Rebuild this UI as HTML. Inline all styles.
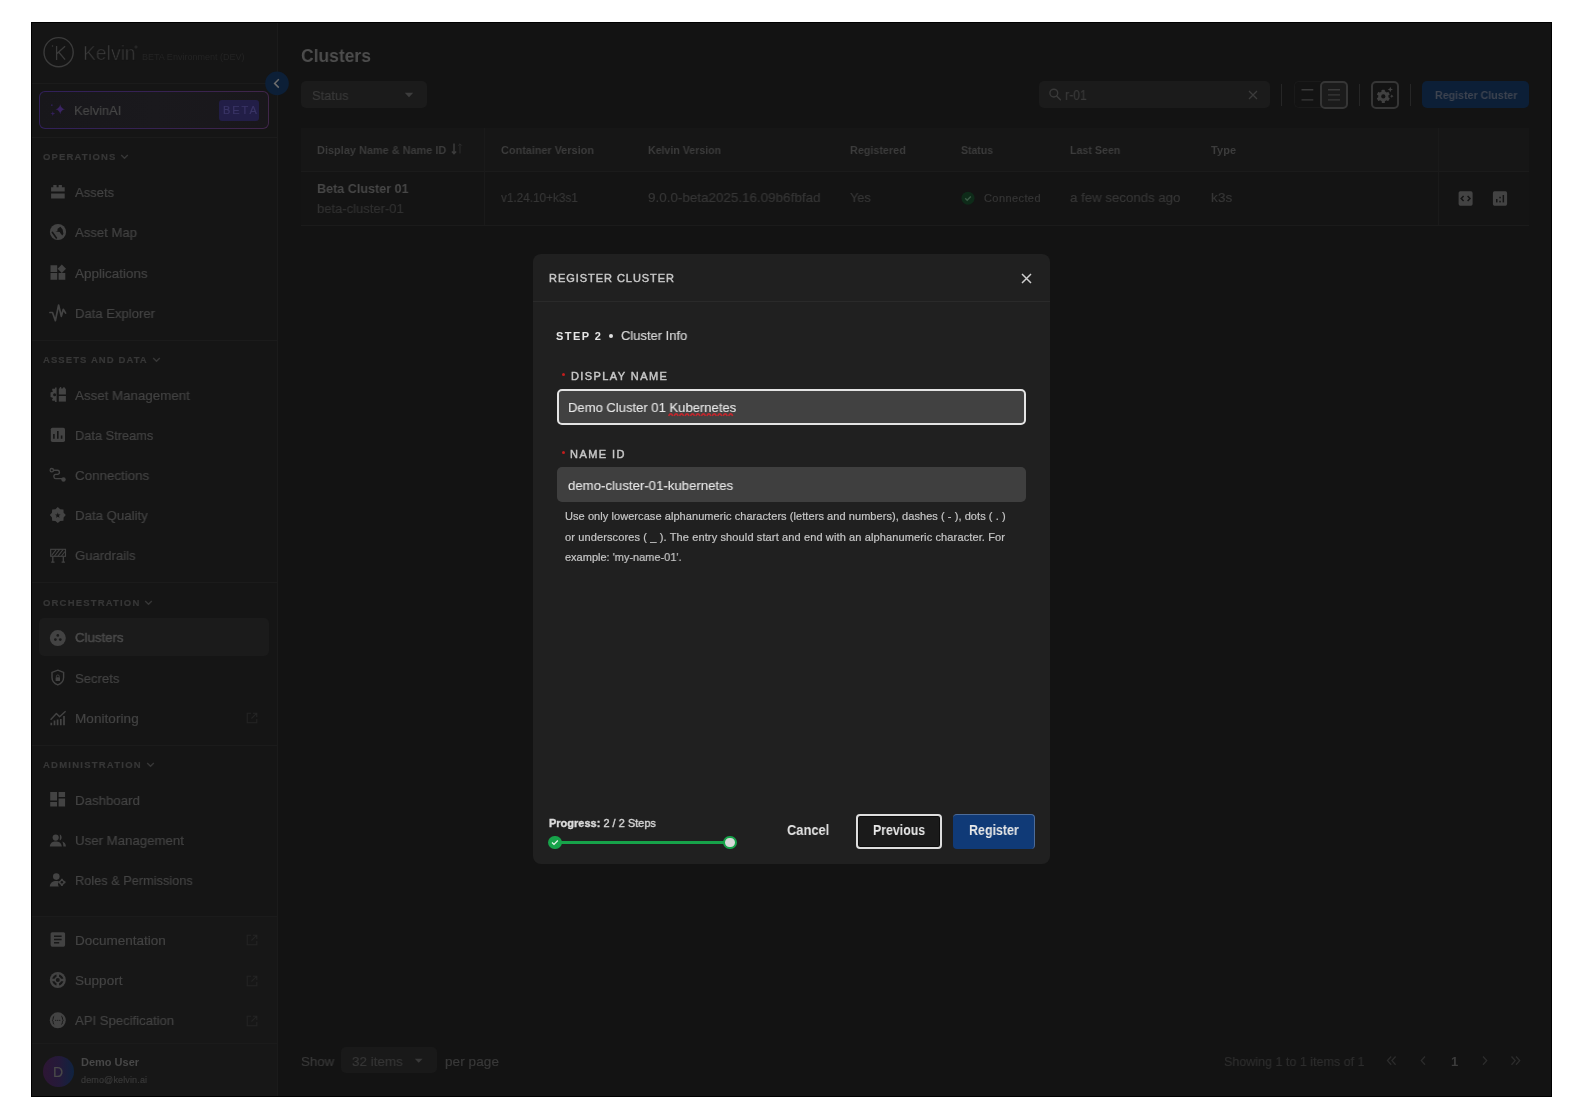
<!DOCTYPE html>
<html><head><meta charset="utf-8"><style>
html,body{margin:0;padding:0;background:#fff;width:1584px;height:1120px;overflow:hidden;}
body{position:relative;font-family:"Liberation Sans", sans-serif;}
.t{position:absolute;white-space:nowrap;line-height:20px;will-change:transform;}
.r{position:absolute;box-sizing:border-box;}
svg{position:absolute;overflow:visible;}
</style></head><body>
<div class="r" style="left:31px;top:22px;width:1521px;height:1075px;background:#000;"></div>
<div class="r" style="left:32px;top:23px;width:246px;height:1073px;background:#151515;"></div>
<div class="r" style="left:32px;top:916px;width:245px;height:180px;background:#171717;"></div>
<div class="r" style="left:277px;top:23px;width:1px;height:1073px;background:#1b1b1b;"></div>
<div class="r" style="left:278px;top:23px;width:1273px;height:1073px;background:#131313;"></div>
<div class="r" style="left:32px;top:83px;width:245px;height:1px;background:#1b1b1b;"></div>
<div class="r" style="left:32px;top:137px;width:245px;height:1px;background:#1b1b1b;"></div>
<div class="r" style="left:32px;top:340px;width:245px;height:1px;background:#1b1b1b;"></div>
<div class="r" style="left:32px;top:582px;width:245px;height:1px;background:#1b1b1b;"></div>
<div class="r" style="left:32px;top:745px;width:245px;height:1px;background:#1b1b1b;"></div>
<div class="r" style="left:32px;top:916px;width:245px;height:1px;background:#1b1b1b;"></div>
<div class="r" style="left:32px;top:1043px;width:245px;height:1px;background:#1b1b1b;"></div>
<svg style="left:43px;top:37px" width="32" height="32" viewBox="0 0 32 32"><circle cx="15.6" cy="15.2" r="14.6" fill="none" stroke="#3b3b3b" stroke-width="1.4"/><path d="M13.6 9V22.9M22.1 9.3L14 16.5M15.6 15L22.1 22.6" fill="none" stroke="#3b3b3b" stroke-width="1.3"/><circle cx="9.5" cy="9.1" r="0.75" fill="#3b3b3b"/></svg>
<span id="t23935548" class="t" style="left:83.00px;top:42.60px;font-size:20px;font-weight:300;color:#3e3e3e;letter-spacing:0.000px;transform:scaleX(0.9648);transform-origin:0 50%;-webkit-text-stroke:0.55px #151515;">Kelvin</span>
<svg style="left:134px;top:45px" width="4" height="4"><circle cx="2" cy="2" r="1.1" fill="none" stroke="#3b3b3b" stroke-width="0.6"/></svg>
<span id="tac954c5f" class="t" style="left:142.00px;top:47.31px;font-size:9px;font-weight:400;color:#242424;letter-spacing:0.005px;">BETA Environment (DEV)</span>
<svg style="left:265px;top:71px" width="24" height="24" viewBox="0 0 24 24"><circle cx="12" cy="12.4" r="11.8" fill="#0c1f37"/><path d="M13.8 8.2L9.6 12.4L13.8 16.6" fill="none" stroke="#6d6d6d" stroke-width="1.5"/></svg>
<div class="r" style="left:39px;top:91px;width:230px;height:38px;border-radius:6px;padding:1.2px;background:linear-gradient(90deg,#31205a,#372252 55%,#40264a);"><div style="width:100%;height:100%;border-radius:5px;background:linear-gradient(90deg,#18171b,#1a191d 50%,#19171b);"></div></div>
<svg style="left:46px;top:101px" width="20" height="18" viewBox="46 101 20 18"><path d="M60.2 104.2 Q60.9 108.4 65 109.2 Q60.9 110 60.2 114.2 Q59.5 110 55.4 109.2 Q59.5 108.4 60.2 104.2Z" fill="#3a2463"/><path d="M52.8 111.2l.6 1.8 1.8.6-1.8.6-.6 1.8-.6-1.8-1.8-.6 1.8-.6z" fill="#33205a"/><circle cx="51.8" cy="105.2" r="0.9" fill="#2e1f52"/></svg>
<span id="t8eb9d1ca" class="t" style="left:74.30px;top:101.00px;font-size:13.5px;font-weight:400;color:#474747;letter-spacing:0.000px;transform:scaleX(0.9540);transform-origin:0 50%;-webkit-text-stroke:0.2px #474747;">KelvinAI</span>
<div class="r" style="left:219px;top:100px;width:40px;height:21px;background:#221e47;border-radius:3px;"></div>
<span id="t5f66c6d7" class="t" style="left:222.50px;top:100.31px;font-size:11px;font-weight:400;color:#3a3566;letter-spacing:1.933px;-webkit-text-stroke:0.2px #3a3566;">BETA</span>
<span id="t2fee27fb" class="t" style="left:42.70px;top:147.11px;font-size:9.5px;font-weight:700;color:#373737;letter-spacing:1.133px;-webkit-text-stroke:0.2px #373737;">OPERATIONS</span>
<svg style="left:119.5px;top:154.1px" width="10" height="6" viewBox="0 0 10 6"><path d="M1.2 1L4.5 4.3L7.8 1" fill="none" stroke="#373737" stroke-width="1.4"/></svg>
<span id="t992ae961" class="t" style="left:75.30px;top:183.00px;font-size:13.5px;font-weight:400;color:#434343;letter-spacing:0.000px;transform:scaleX(0.9634);transform-origin:0 50%;-webkit-text-stroke:0.2px #434343;">Assets</span>
<span id="t16f8bc88" class="t" style="left:75.30px;top:223.31px;font-size:13.5px;font-weight:400;color:#434343;letter-spacing:0.000px;transform:scaleX(0.9719);transform-origin:0 50%;-webkit-text-stroke:0.2px #434343;">Asset Map</span>
<span id="tbd119a5a" class="t" style="left:75.30px;top:263.50px;font-size:13.5px;font-weight:400;color:#434343;letter-spacing:0.000px;transform:scaleX(0.9973);transform-origin:0 50%;-webkit-text-stroke:0.2px #434343;">Applications</span>
<span id="tb3951d84" class="t" style="left:75.30px;top:303.50px;font-size:13.5px;font-weight:400;color:#434343;letter-spacing:0.000px;transform:scaleX(0.9687);transform-origin:0 50%;-webkit-text-stroke:0.2px #434343;">Data Explorer</span>
<span id="t3114021c" class="t" style="left:42.70px;top:349.80px;font-size:9.5px;font-weight:700;color:#373737;letter-spacing:1.086px;-webkit-text-stroke:0.2px #373737;">ASSETS AND DATA</span>
<svg style="left:151.5px;top:356.8px" width="10" height="6" viewBox="0 0 10 6"><path d="M1.2 1L4.5 4.3L7.8 1" fill="none" stroke="#373737" stroke-width="1.4"/></svg>
<span id="t4a658050" class="t" style="left:75.30px;top:385.50px;font-size:13.5px;font-weight:400;color:#434343;letter-spacing:0.000px;transform:scaleX(0.9871);transform-origin:0 50%;-webkit-text-stroke:0.2px #434343;">Asset Management</span>
<span id="t563b46b2" class="t" style="left:75.30px;top:425.81px;font-size:13.5px;font-weight:400;color:#434343;letter-spacing:0.000px;transform:scaleX(0.9482);transform-origin:0 50%;-webkit-text-stroke:0.2px #434343;">Data Streams</span>
<span id="t97691725" class="t" style="left:75.30px;top:466.20px;font-size:13.5px;font-weight:400;color:#434343;letter-spacing:0.000px;transform:scaleX(0.9893);transform-origin:0 50%;-webkit-text-stroke:0.2px #434343;">Connections</span>
<span id="t1be241d7" class="t" style="left:75.30px;top:506.00px;font-size:13.5px;font-weight:400;color:#434343;letter-spacing:0.000px;transform:scaleX(0.9797);transform-origin:0 50%;-webkit-text-stroke:0.2px #434343;">Data Quality</span>
<span id="t49b28394" class="t" style="left:75.30px;top:546.20px;font-size:13.5px;font-weight:400;color:#434343;letter-spacing:0.000px;transform:scaleX(0.9726);transform-origin:0 50%;-webkit-text-stroke:0.2px #434343;">Guardrails</span>
<span id="t620712aa" class="t" style="left:42.70px;top:592.80px;font-size:9.5px;font-weight:700;color:#373737;letter-spacing:1.175px;-webkit-text-stroke:0.2px #373737;">ORCHESTRATION</span>
<svg style="left:143.5px;top:599.8px" width="10" height="6" viewBox="0 0 10 6"><path d="M1.2 1L4.5 4.3L7.8 1" fill="none" stroke="#373737" stroke-width="1.4"/></svg>
<div class="r" style="left:39px;top:618px;width:230px;height:38px;background:#1b1b1b;border-radius:5px;"></div>
<span id="t260d12a1" class="t" style="left:75.30px;top:628.11px;font-size:13.5px;font-weight:400;color:#4a4a4a;letter-spacing:0.000px;transform:scaleX(0.9800);transform-origin:0 50%;-webkit-text-stroke:0.5px #4a4a4a;">Clusters</span>
<span id="t4fb7b7b8" class="t" style="left:75.30px;top:668.61px;font-size:13.5px;font-weight:400;color:#434343;letter-spacing:0.000px;transform:scaleX(0.9696);transform-origin:0 50%;-webkit-text-stroke:0.2px #434343;">Secrets</span>
<span id="td3384657" class="t" style="left:75.30px;top:708.90px;font-size:13.5px;font-weight:400;color:#434343;letter-spacing:0.067px;-webkit-text-stroke:0.2px #434343;">Monitoring</span>
<span id="taa898c11" class="t" style="left:42.70px;top:754.91px;font-size:9.5px;font-weight:700;color:#373737;letter-spacing:1.231px;-webkit-text-stroke:0.2px #373737;">ADMINISTRATION</span>
<svg style="left:145.5px;top:761.9px" width="10" height="6" viewBox="0 0 10 6"><path d="M1.2 1L4.5 4.3L7.8 1" fill="none" stroke="#373737" stroke-width="1.4"/></svg>
<span id="t4c94cc49" class="t" style="left:75.30px;top:790.61px;font-size:13.5px;font-weight:400;color:#434343;letter-spacing:0.000px;transform:scaleX(0.9833);transform-origin:0 50%;-webkit-text-stroke:0.2px #434343;">Dashboard</span>
<span id="tb8283012" class="t" style="left:75.30px;top:831.00px;font-size:13.5px;font-weight:400;color:#434343;letter-spacing:0.000px;transform:scaleX(0.9811);transform-origin:0 50%;-webkit-text-stroke:0.2px #434343;">User Management</span>
<span id="t43deff85" class="t" style="left:75.30px;top:871.00px;font-size:13.5px;font-weight:400;color:#434343;letter-spacing:0.000px;transform:scaleX(0.9456);transform-origin:0 50%;-webkit-text-stroke:0.2px #434343;">Roles & Permissions</span>
<span id="tbf958b15" class="t" style="left:75.30px;top:930.90px;font-size:13.5px;font-weight:400;color:#434343;letter-spacing:0.000px;transform:scaleX(0.9967);transform-origin:0 50%;-webkit-text-stroke:0.2px #434343;">Documentation</span>
<span id="t38ddc886" class="t" style="left:75.30px;top:971.31px;font-size:13.5px;font-weight:400;color:#434343;letter-spacing:0.033px;-webkit-text-stroke:0.2px #434343;">Support</span>
<span id="t636bf80a" class="t" style="left:75.30px;top:1011.31px;font-size:13.5px;font-weight:400;color:#434343;letter-spacing:0.000px;transform:scaleX(0.9716);transform-origin:0 50%;-webkit-text-stroke:0.2px #434343;">API Specification</span>
<svg style="left:246px;top:712px" width="12" height="12" viewBox="0 0 12 12"><path d="M5 1.2H1.2V10.8H10.8V7M7 1.2H10.8V5M10.8 1.2L5.5 6.5" fill="none" stroke="#242424" stroke-width="1.1"/></svg>
<svg style="left:246px;top:934px" width="12" height="12" viewBox="0 0 12 12"><path d="M5 1.2H1.2V10.8H10.8V7M7 1.2H10.8V5M10.8 1.2L5.5 6.5" fill="none" stroke="#242424" stroke-width="1.1"/></svg>
<svg style="left:246px;top:975px" width="12" height="12" viewBox="0 0 12 12"><path d="M5 1.2H1.2V10.8H10.8V7M7 1.2H10.8V5M10.8 1.2L5.5 6.5" fill="none" stroke="#242424" stroke-width="1.1"/></svg>
<svg style="left:246px;top:1015px" width="12" height="12" viewBox="0 0 12 12"><path d="M5 1.2H1.2V10.8H10.8V7M7 1.2H10.8V5M10.8 1.2L5.5 6.5" fill="none" stroke="#242424" stroke-width="1.1"/></svg>
<div class="r" style="left:42.5px;top:1055.5px;width:31px;height:31px;border-radius:50%;background:linear-gradient(90deg,#2d1634,#241a3a 55%,#0f2340);"></div>
<span id="t5b27cf1a" class="t" style="left:52.50px;top:1061.52px;font-size:14px;font-weight:400;color:#4a4a4a;letter-spacing:0.000px;-webkit-text-stroke:0.2px #4a4a4a;">D</span>
<span id="t9c03d053" class="t" style="left:81.30px;top:1052.31px;font-size:11px;font-weight:700;color:#474747;letter-spacing:0.000px;transform:scaleX(0.9983);transform-origin:0 50%;">Demo User</span>
<span id="ta2ef6f14" class="t" style="left:81.30px;top:1069.61px;font-size:9px;font-weight:400;color:#393939;letter-spacing:0.146px;-webkit-text-stroke:0.2px #393939;">demo@kelvin.ai</span>
<span id="t1c065526" class="t" style="left:301.40px;top:45.50px;font-size:19px;font-weight:700;color:#4d4d4d;letter-spacing:0.000px;transform:scaleX(0.9197);transform-origin:0 50%;">Clusters</span>
<div class="r" style="left:301px;top:81px;width:126px;height:27px;background:#1b1b1b;border-radius:5px;"></div>
<span id="t708f55a0" class="t" style="left:311.80px;top:85.90px;font-size:13.5px;font-weight:400;color:#393939;letter-spacing:0.000px;transform:scaleX(0.9553);transform-origin:0 50%;-webkit-text-stroke:0.2px #393939;">Status</span>
<svg style="left:404px;top:92px" width="10" height="6"><path d="M0.8 0.8H9.2L5 5.2Z" fill="#3d3d3d"/></svg>
<div class="r" style="left:1039px;top:81px;width:231px;height:27px;background:#1b1b1b;border-radius:5px;"></div>
<svg style="left:1047px;top:86px" width="16" height="16" viewBox="1047 86 16 16"><circle cx="1053.8" cy="93.1" r="3.9" fill="none" stroke="#393939" stroke-width="1.4"/><path d="M1056.6 96L1060.4 99.8" stroke="#393939" stroke-width="1.6" stroke-linecap="round"/></svg>
<span id="tf2311ad7" class="t" style="left:1065.00px;top:84.80px;font-size:14px;font-weight:400;color:#393939;letter-spacing:0.000px;transform:scaleX(0.8800);transform-origin:0 50%;-webkit-text-stroke:0.2px #393939;">r-01</span>
<svg style="left:1248px;top:90px" width="10" height="10" viewBox="0 0 10 10"><path d="M1 1L9 9M9 1L1 9" stroke="#3b3b3b" stroke-width="1.3"/></svg>
<div class="r" style="left:1281px;top:84px;width:1px;height:22px;background:#262626;"></div>
<div class="r" style="left:1359px;top:84px;width:1px;height:22px;background:#262626;"></div>
<div class="r" style="left:1410px;top:84px;width:1px;height:22px;background:#262626;"></div>
<div class="r" style="left:1294px;top:81px;width:27px;height:27px;border:1.5px solid #1a1a1a;border-right:none;border-radius:5px 0 0 5px;"></div>
<div class="r" style="left:1320px;top:81px;width:28px;height:27.5px;border:2px solid #363636;border-radius:5px;background:#1b1b1b;"></div>
<svg style="left:1301px;top:89px" width="14" height="14"><path d="M0.5 0.8H12.3M0.5 10.9H12.3" stroke="#3a3a3a" stroke-width="1.4"/></svg>
<svg style="left:1328px;top:89px" width="14" height="14"><path d="M0 0.8H12M0 5.9H12M0 10.9H12" stroke="#3a3a3a" stroke-width="1.4"/></svg>
<div class="r" style="left:1371px;top:81px;width:28px;height:27.700000000000003px;border:2px solid #363636;border-radius:5px;"></div>
<svg style="left:1374px;top:86px" width="22" height="20" viewBox="1374 86 22 20"><g fill="#414141"><circle cx="1383.3" cy="96.4" r="5.1"/><g transform="translate(1383.3 96.4)"><rect x="-1.6" y="-6.6" width="3.2" height="13.2" rx="0.4"/><rect x="-1.6" y="-6.6" width="3.2" height="13.2" rx="0.4" transform="rotate(60)"/><rect x="-1.6" y="-6.6" width="3.2" height="13.2" rx="0.4" transform="rotate(120)"/></g></g><circle cx="1383.3" cy="96.4" r="2.1" fill="#131313"/><path d="M1390.3 86.8L1391.1 88.7L1393 89.5L1391.1 90.3L1390.3 92.2L1389.5 90.3L1387.6 89.5L1389.5 88.7Z M1391.8 94.4L1392.4 95.6L1393.6 96.2L1392.4 96.8L1391.8 98L1391.2 96.8L1390 96.2L1391.2 95.6Z" fill="#414141"/></svg>
<div class="r" style="left:1422px;top:81px;width:107px;height:27px;background:#0c1f37;border-radius:5px;"></div>
<span id="tee40b4aa" class="t" style="left:1434.70px;top:85.21px;font-size:11px;font-weight:700;color:#3e4450;letter-spacing:0.000px;transform:scaleX(0.9694);transform-origin:0 50%;">Register Cluster</span>
<div class="r" style="left:301px;top:128px;width:1228px;height:43px;background:#161616;"></div>
<div class="r" style="left:301px;top:171px;width:1228px;height:54px;background:#141414;"></div>
<div class="r" style="left:301px;top:170.5px;width:1228px;height:1.0px;background:#1b1b1b;"></div>
<div class="r" style="left:301px;top:224.5px;width:1228px;height:1.0px;background:#1b1b1b;"></div>
<div class="r" style="left:484px;top:128px;width:1px;height:97px;background:#1a1a1a;"></div>
<div class="r" style="left:1437.5px;top:128px;width:1.0px;height:97px;background:#1a1a1a;"></div>
<span id="td6a3cb3b" class="t" style="left:316.50px;top:140.21px;font-size:11px;font-weight:700;color:#3c3c3c;letter-spacing:0.000px;transform:scaleX(0.9931);transform-origin:0 50%;">Display Name &amp; Name ID</span>
<svg style="left:451px;top:143px" width="12" height="12" viewBox="0 0 12 12"><path d="M3 0.5V10.5M0.9 8.4L3 10.6L5.1 8.4" fill="none" stroke="#3c3c3c" stroke-width="1.5"/><path d="M9 10.5V0.8M7.2 2.6L9 0.8L10.8 2.6" fill="none" stroke="#2d2d2d" stroke-width="1"/></svg>
<span id="t8d4c1b64" class="t" style="left:500.90px;top:139.81px;font-size:11px;font-weight:700;color:#3c3c3c;letter-spacing:0.000px;transform:scaleX(0.9862);transform-origin:0 50%;">Container Version</span>
<span id="t4822bce1" class="t" style="left:647.50px;top:139.81px;font-size:11px;font-weight:700;color:#3c3c3c;letter-spacing:0.000px;transform:scaleX(0.9645);transform-origin:0 50%;">Kelvin Version</span>
<span id="tf69fe2a7" class="t" style="left:850.10px;top:139.81px;font-size:11px;font-weight:700;color:#3c3c3c;letter-spacing:0.000px;transform:scaleX(0.9807);transform-origin:0 50%;">Registered</span>
<span id="t34ab815f" class="t" style="left:960.70px;top:139.81px;font-size:11px;font-weight:700;color:#3c3c3c;letter-spacing:0.000px;transform:scaleX(0.9529);transform-origin:0 50%;">Status</span>
<span id="t75c7f643" class="t" style="left:1070.30px;top:139.81px;font-size:11px;font-weight:700;color:#3c3c3c;letter-spacing:0.000px;transform:scaleX(0.9673);transform-origin:0 50%;">Last Seen</span>
<span id="tf9cd95cb" class="t" style="left:1211.20px;top:139.81px;font-size:11px;font-weight:700;color:#3c3c3c;letter-spacing:0.067px;">Type</span>
<span id="taf60aa4c" class="t" style="left:316.50px;top:179.00px;font-size:13.5px;font-weight:700;color:#474747;letter-spacing:0.000px;transform:scaleX(0.9316);transform-origin:0 50%;">Beta Cluster 01</span>
<span id="tb2fccb8c" class="t" style="left:316.50px;top:198.81px;font-size:13.5px;font-weight:400;color:#313131;letter-spacing:0.000px;transform:scaleX(0.9633);transform-origin:0 50%;-webkit-text-stroke:0.2px #313131;">beta-cluster-01</span>
<span id="t3e6a62fd" class="t" style="left:500.90px;top:188.20px;font-size:13.5px;font-weight:400;color:#363636;letter-spacing:0.000px;transform:scaleX(0.8705);transform-origin:0 50%;-webkit-text-stroke:0.2px #363636;">v1.24.10+k3s1</span>
<span id="t99ccfb00" class="t" style="left:647.50px;top:188.20px;font-size:13.5px;font-weight:400;color:#363636;letter-spacing:0.000px;transform:scaleX(0.9948);transform-origin:0 50%;-webkit-text-stroke:0.2px #363636;">9.0.0-beta2025.16.09b6fbfad</span>
<span id="tad3ee24d" class="t" style="left:850.10px;top:188.20px;font-size:13.5px;font-weight:400;color:#363636;letter-spacing:0.000px;transform:scaleX(0.9409);transform-origin:0 50%;-webkit-text-stroke:0.2px #363636;">Yes</span>
<svg style="left:961px;top:191px" width="14" height="14" viewBox="0 0 14 14"><circle cx="7" cy="7.2" r="6.5" fill="#0e2b19"/><path d="M4.2 7.3L6.2 9.2L9.8 5.4" fill="none" stroke="#3b5a46" stroke-width="1.4"/></svg>
<span id="t0bffc30a" class="t" style="left:984.00px;top:188.40px;font-size:11px;font-weight:400;color:#363636;letter-spacing:0.412px;-webkit-text-stroke:0.2px #363636;">Connected</span>
<span id="t7504d821" class="t" style="left:1070.30px;top:188.20px;font-size:13.5px;font-weight:400;color:#363636;letter-spacing:0.000px;transform:scaleX(0.9814);transform-origin:0 50%;-webkit-text-stroke:0.2px #363636;">a few seconds ago</span>
<span id="t6935d677" class="t" style="left:1211.00px;top:188.20px;font-size:13.5px;font-weight:400;color:#363636;letter-spacing:0.150px;-webkit-text-stroke:0.2px #363636;">k3s</span>
<svg style="left:1456px;top:189px" width="56" height="20" viewBox="1456 189 56 20"><rect x="1458.6" y="191.3" width="14" height="14.4" rx="1.6" fill="#434343"/><path d="M1463.6 196.1L1461.2 198.6L1463.6 201.1M1467.6 196.1L1470 198.6L1467.6 201.1" fill="none" stroke="#141414" stroke-width="1.5"/><rect x="1492.9" y="191.3" width="14.2" height="14.4" rx="1.6" fill="#434343"/><g fill="#141414"><rect x="1496" y="199" width="1.5" height="3.4"/><rect x="1499.3" y="196.8" width="1.5" height="1.5"/><rect x="1499.3" y="200.8" width="1.5" height="1.6"/><rect x="1502.6" y="195" width="1.5" height="7.4"/></g></svg>
<span id="t52ae882c" class="t" style="left:301.20px;top:1051.81px;font-size:13.5px;font-weight:400;color:#393939;letter-spacing:0.000px;transform:scaleX(0.9824);transform-origin:0 50%;-webkit-text-stroke:0.2px #393939;">Show</span>
<div class="r" style="left:341px;top:1047px;width:96px;height:26px;background:#191919;border-radius:5px;"></div>
<span id="t8b9e0cdb" class="t" style="left:352.10px;top:1051.81px;font-size:13.5px;font-weight:400;color:#363636;letter-spacing:0.000px;transform:scaleX(0.9941);transform-origin:0 50%;-webkit-text-stroke:0.2px #363636;">32 items</span>
<svg style="left:414px;top:1058px" width="10" height="6"><path d="M0.8 0.8H8.6L4.7 4.8Z" fill="#393939"/></svg>
<span id="t15814784" class="t" style="left:445.20px;top:1051.81px;font-size:13.5px;font-weight:400;color:#393939;letter-spacing:0.086px;-webkit-text-stroke:0.2px #393939;">per page</span>
<span id="ta0619747" class="t" style="left:1223.90px;top:1051.70px;font-size:13.5px;font-weight:400;color:#2e2e2e;letter-spacing:0.000px;transform:scaleX(0.9276);transform-origin:0 50%;-webkit-text-stroke:0.2px #2e2e2e;">Showing 1 to 1 items of 1</span>
<svg style="left:1386px;top:1054px" width="140" height="14" viewBox="0 0 140 14"><path d="M5.2 2.5L1.5 6.6L5.2 10.7M9.6 2.5L5.9 6.6L9.6 10.7" fill="none" stroke="#2c2c2c" stroke-width="1.3"/><path d="M39 2.5L35.3 6.6L39 10.7" fill="none" stroke="#2c2c2c" stroke-width="1.3"/><path d="M97 2.5L100.7 6.6L97 10.7" fill="none" stroke="#2c2c2c" stroke-width="1.3"/><path d="M125.5 2.5L129.2 6.6L125.5 10.7M130 2.5L133.7 6.6L130 10.7" fill="none" stroke="#2c2c2c" stroke-width="1.3"/></svg>
<span id="t20fd6f6d" class="t" style="left:1450.50px;top:1051.70px;font-size:13px;font-weight:700;color:#3c3c3c;letter-spacing:0.000px;">1</span>
<div class="r" style="left:533px;top:254px;width:517px;height:610px;background:#202020;border-radius:8px;"></div>
<div class="r" style="left:533px;top:301px;width:517px;height:1px;background:#2a2a2a;"></div>
<span id="t78e3d27e" class="t" style="left:548.80px;top:268.21px;font-size:11px;font-weight:400;color:#c8c8c8;letter-spacing:0.960px;-webkit-text-stroke:0.45px #c8c8c8;">REGISTER CLUSTER</span>
<svg style="left:1021px;top:272.5px" width="11" height="11" viewBox="0 0 11 11"><path d="M1 1L10 10M10 1L1 10" stroke="#cfcfcf" stroke-width="1.45"/></svg>
<span id="tf3922d97" class="t" style="left:556.10px;top:326.01px;font-size:11px;font-weight:700;color:#e6e6e6;letter-spacing:1.420px;">STEP 2</span>
<div class="r" style="left:608.6px;top:333.5px;width:4.6px;height:4.6px;border-radius:50%;background:#e0e0e0;"></div>
<span id="t41108e8b" class="t" style="left:621.00px;top:326.00px;font-size:13.5px;font-weight:400;color:#d6d6d6;letter-spacing:0.000px;transform:scaleX(0.9594);transform-origin:0 50%;-webkit-text-stroke:0.2px #d6d6d6;">Cluster Info</span>
<div class="r" style="left:561.5px;top:372.6px;width:3px;height:3px;border-radius:50%;background:#c21d1d;"></div>
<span id="t509546b9" class="t" style="left:570.50px;top:366.31px;font-size:11px;font-weight:400;color:#c8c8c8;letter-spacing:1.409px;-webkit-text-stroke:0.45px #c8c8c8;">DISPLAY NAME</span>
<div class="r" style="left:557px;top:389px;width:469px;height:35.5px;background:#414141;border:2px solid #e4e4e4;border-radius:5px;"></div>
<span id="t4d1bfd4b" class="t" style="left:567.90px;top:397.80px;font-size:13.6px;font-weight:400;color:#e6e6e6;letter-spacing:0.000px;transform:scaleX(0.9594);transform-origin:0 50%;-webkit-text-stroke:0.1px #e6e6e6;">Demo Cluster 01 Kubernetes</span>
<svg style="left:666px;top:410px" width="72" height="8" viewBox="666 410 72 8"><path d="M668.60 415.8 Q670.70 411.9 672.80 415.8" fill="none" stroke="#c0272d" stroke-width="1.6"/><path d="M674.05 415.8 Q676.15 411.9 678.25 415.8" fill="none" stroke="#c0272d" stroke-width="1.6"/><path d="M679.50 415.8 Q681.60 411.9 683.70 415.8" fill="none" stroke="#c0272d" stroke-width="1.6"/><path d="M684.95 415.8 Q687.05 411.9 689.15 415.8" fill="none" stroke="#c0272d" stroke-width="1.6"/><path d="M690.40 415.8 Q692.50 411.9 694.60 415.8" fill="none" stroke="#c0272d" stroke-width="1.6"/><path d="M695.85 415.8 Q697.95 411.9 700.05 415.8" fill="none" stroke="#c0272d" stroke-width="1.6"/><path d="M701.30 415.8 Q703.40 411.9 705.50 415.8" fill="none" stroke="#c0272d" stroke-width="1.6"/><path d="M706.75 415.8 Q708.85 411.9 710.95 415.8" fill="none" stroke="#c0272d" stroke-width="1.6"/><path d="M712.20 415.8 Q714.30 411.9 716.40 415.8" fill="none" stroke="#c0272d" stroke-width="1.6"/><path d="M717.65 415.8 Q719.75 411.9 721.85 415.8" fill="none" stroke="#c0272d" stroke-width="1.6"/><path d="M723.10 415.8 Q725.20 411.9 727.30 415.8" fill="none" stroke="#c0272d" stroke-width="1.6"/><path d="M728.55 415.8 Q730.65 411.9 732.75 415.8" fill="none" stroke="#c0272d" stroke-width="1.6"/></svg>
<div class="r" style="left:561.5px;top:450.8px;width:3px;height:3px;border-radius:50%;background:#c21d1d;"></div>
<span id="t91383a1c" class="t" style="left:570.40px;top:444.01px;font-size:11px;font-weight:400;color:#c8c8c8;letter-spacing:1.433px;-webkit-text-stroke:0.45px #c8c8c8;">NAME ID</span>
<div class="r" style="left:557px;top:467px;width:469px;height:34.5px;background:#3f3f3f;border-radius:5px;"></div>
<span id="t5aa9fb97" class="t" style="left:568.00px;top:475.80px;font-size:13.6px;font-weight:400;color:#e6e6e6;letter-spacing:0.000px;transform:scaleX(0.9712);transform-origin:0 50%;-webkit-text-stroke:0.1px #e6e6e6;">demo-cluster-01-kubernetes</span>
<span id="t0212375f" class="t" style="left:564.80px;top:506.21px;font-size:11px;font-weight:400;color:#c6c6c6;letter-spacing:0.067px;-webkit-text-stroke:0.2px #c6c6c6;">Use only lowercase alphanumeric characters (letters and numbers), dashes ( - ), dots ( . )</span>
<span id="t6cf950e3" class="t" style="left:564.80px;top:526.62px;font-size:11px;font-weight:400;color:#c6c6c6;letter-spacing:0.126px;-webkit-text-stroke:0.2px #c6c6c6;">or underscores ( _ ). The entry should start and end with an alphanumeric character. For</span>
<span id="t36479dba" class="t" style="left:564.80px;top:546.62px;font-size:11px;font-weight:400;color:#c6c6c6;letter-spacing:0.000px;transform:scaleX(0.9983);transform-origin:0 50%;-webkit-text-stroke:0.2px #c6c6c6;">example: &#39;my-name-01&#39;.</span>
<span id="t36f51af5" class="t" style="left:548.60px;top:812.51px;font-size:11px;font-weight:400;color:#dcdcdc;letter-spacing:0.000px;transform:scaleX(0.9981);transform-origin:0 50%;-webkit-text-stroke:0.35px #dcdcdc;"><b>Progress:</b> 2 / 2 Steps</span>
<div class="r" style="left:555px;top:841.3px;width:175px;height:2.5px;background:#17a34a;"></div>
<div class="r" style="left:548.2px;top:835.7px;width:13.6px;height:13.6px;border-radius:50%;background:#17a34a;"></div>
<svg style="left:551px;top:839px" width="8" height="7" viewBox="0 0 8 7"><path d="M1 3.5L3 5.4L6.8 1.5" fill="none" stroke="#e8f5ec" stroke-width="1.3"/></svg>
<div class="r" style="left:723.3px;top:835.8px;width:13.4px;height:13.4px;border-radius:50%;background:#d8d8d8;border:2.2px solid #17a34a;"></div>
<span id="t657c6c8b" class="t" style="left:786.80px;top:820.41px;font-size:14px;font-weight:700;color:#e4e4e4;letter-spacing:0.000px;transform:scaleX(0.9196);transform-origin:0 50%;">Cancel</span>
<div class="r" style="left:856px;top:814px;width:86px;height:35px;border:2px solid #dedede;border-radius:4px;background:#1a1a1a;box-shadow:inset 0 0 0 1px #0c0c0c;"></div>
<span id="tf7583972" class="t" style="left:873.00px;top:820.41px;font-size:14px;font-weight:700;color:#e8e8e8;letter-spacing:0.000px;transform:scaleX(0.8831);transform-origin:0 50%;">Previous</span>
<div class="r" style="left:953px;top:814px;width:82px;height:35px;background:#103a77;border-radius:4px;border-top:1.2px solid #4d6c99;border-right:1.2px solid #4d6c99;"></div>
<span id="tebd9ac6e" class="t" style="left:969.00px;top:820.41px;font-size:14px;font-weight:700;color:#e8e8e8;letter-spacing:0.000px;transform:scaleX(0.8893);transform-origin:0 50%;">Register</span>
<svg style="left:48px;top:182px" width="20" height="20" viewBox="48 182 20 20"><path d="M51.1 187.3H64.7V191.6H51.1Z M51.1 193.6H64.7V198.6H51.1Z M53.3 185H56.6V187.5H53.3Z M58.6 185H61.9V187.5H58.6Z" fill="#434343"/></svg>
<svg style="left:47px;top:221px" width="22" height="22" viewBox="47 221 22 22"><circle cx="58" cy="232" r="8.1" fill="#434343"/><path d="M52.3 232.3 L56.4 238" stroke="#151515" stroke-width="1.6" stroke-linecap="round"/><path d="M55.3 231.6 L57.4 230.9 L57.6 228.8 L60.4 226.8 L62.6 229.6 L63.4 233.8 L62.3 235.4 L60.4 233.2 L59.8 231.9Z" fill="#151515"/></svg>
<svg style="left:48px;top:262px" width="20" height="20" viewBox="48 262 20 20"><path d="M50.5 265.2H57.2V271.9H50.5Z M50.5 273.1H57.2V279.8H50.5Z M58.6 273.1H65.3V279.8H58.6Z M61.8 264.4 L66 268.7 L61.8 272.9 L57.6 268.7Z" fill="#434343"/></svg>
<svg style="left:47px;top:302px" width="22" height="22" viewBox="47 302 22 22"><path d="M49.9 312.5H52.5L55.4 320.7L58.6 305L61.3 316.3L63.3 309.3L65.6 313.1" fill="none" stroke="#434343" stroke-width="1.7" stroke-linejoin="round" stroke-linecap="round"/></svg>
<svg style="left:47px;top:384px" width="22" height="22" viewBox="47 384 22 22"><g fill="#434343"><path d="M56.6 387.4 V402 H55.2 L54.6 400.4 L52.7 400.9 L52 399.5 L53.1 397.9 L50.5 396.9 V392.6 L53.1 391.6 L52 390 L52.7 388.6 L54.6 389.1 L55.2 387.4Z"/><path d="M58.8 389.2 L60.2 387 H61.2 V388.5 H62.6 L63.4 387.2 H64.4 L65.9 389.2 V394.4 H58.8Z"/><path d="M58.8 396 H65.9 V401.6 H58.8Z"/></g><circle cx="54.6" cy="394.7" r="1.5" fill="#151515"/></svg>
<svg style="left:48px;top:425px" width="20" height="20" viewBox="48 425 20 20"><rect x="50.8" y="427.7" width="14.2" height="14.2" rx="1.6" fill="#434343"/><path d="M53.9 434V438.8M57.8 431V438.8M61.6 435.5V438.8" stroke="#151515" stroke-width="1.6"/></svg>
<svg style="left:47px;top:466px" width="22" height="18" viewBox="47 466 22 18"><circle cx="51.8" cy="470.2" r="1.7" fill="none" stroke="#434343" stroke-width="1.3"/><path d="M53.5 470.3 H57.5 C59.8 470.3 60.2 473.9 57.8 474.2 L55.6 474.4 C53 474.8 53.5 478.8 56 478.6 L62 478.6" fill="none" stroke="#434343" stroke-width="1.4"/><circle cx="63.5" cy="479.5" r="2.2" fill="#434343"/></svg>
<svg style="left:47px;top:504px" width="22" height="22" viewBox="47 504 22 22"><polygon points="57.80,507.10 60.21,509.28 63.46,509.44 63.62,512.69 65.80,515.10 63.62,517.51 63.46,520.76 60.21,520.92 57.80,523.10 55.39,520.92 52.14,520.76 51.98,517.51 49.80,515.10 51.98,512.69 52.14,509.44 55.39,509.28" fill="#434343"/><polygon points="57.80,512.50 58.53,514.39 60.56,514.50 58.99,515.79 59.50,517.75 57.80,516.65 56.10,517.75 56.61,515.79 55.04,514.50 57.07,514.39" fill="#151515"/></svg>
<svg style="left:47px;top:545px" width="22" height="20" viewBox="47 545 22 20"><rect x="50.7" y="549.3" width="14.8" height="7" fill="none" stroke="#434343" stroke-width="1.1"/><path d="M51.5 555.5L56 549.8M54.5 556L59.5 549.6M58 556L63 549.6M61.5 556L65 551.5" stroke="#434343" stroke-width="1.1"/><path d="M52.8 556.4V562M63.3 556.4V562M51.2 562.2H54.5M61.6 562.2H64.9" stroke="#434343" stroke-width="1.3"/></svg>
<svg style="left:47px;top:627px" width="22" height="22" viewBox="47 627 22 22"><circle cx="57.8" cy="638.1" r="8" fill="#434343"/><g fill="#1b1b1b"><circle cx="57.8" cy="635.4" r="1.35"/><circle cx="55.4" cy="639.6" r="1.35"/><circle cx="60.3" cy="639.6" r="1.35"/></g></svg>
<svg style="left:47px;top:666px" width="22" height="22" viewBox="47 666 22 22"><path d="M57.8 670.2 L63.6 672.4 V677.6 C63.6 681.2 61 683.8 57.8 684.9 C54.6 683.8 52 681.2 52 677.6 V672.4Z" fill="none" stroke="#434343" stroke-width="1.4"/><rect x="55.6" y="677.2" width="4.4" height="3.8" rx="0.5" fill="#434343"/><path d="M56.4 677.4V676.2C56.4 674.5 59.2 674.5 59.2 676.2V677.4" fill="none" stroke="#434343" stroke-width="0.9"/></svg>
<svg style="left:47px;top:708px" width="22" height="20" viewBox="47 708 22 20"><path d="M50.6 719.8 L56.4 713.6 L59.6 716.8 L65.6 711.2" fill="none" stroke="#434343" stroke-width="1.4" stroke-linejoin="round"/><path d="M51.3 722.8V725.2M54.5 720.5V725.2M57.6 719.5V725.2M60.8 719V725.2M64 716V725.2" stroke="#434343" stroke-width="1.7"/></svg>
<svg style="left:48px;top:790px" width="20" height="20" viewBox="48 790 20 20"><path d="M50.2 791.9H57V800.5H50.2Z M50.2 802H57V806.6H50.2Z M58.6 791.9H65.1V797H58.6Z M58.6 798.5H65.1V806.6H58.6Z" fill="#434343"/></svg>
<svg style="left:47px;top:832px" width="22" height="18" viewBox="47 832 22 18"><circle cx="55.7" cy="837.6" r="3.1" fill="#434343"/><path d="M49.8 846.6 C50 842.7 52.8 841.5 55.7 841.5 C58.6 841.5 61.5 842.7 61.8 846.6Z" fill="#434343"/><path d="M59.7 834.6 C62 835 62.6 839.5 59.8 840.5 C59.6 839 60.3 836.3 59.7 834.6Z" fill="#434343"/><path d="M62.3 841.6 C64.6 842.2 65.9 844 65.9 846.6 H63.4 C63.2 844.4 63 843 62.3 841.6Z" fill="#434343"/></svg>
<svg style="left:47px;top:872px" width="22" height="18" viewBox="47 872 22 18"><circle cx="56.3" cy="876.6" r="3.3" fill="#434343"/><path d="M49.8 886.5 C50 882.8 52.8 881 56.3 881 C57.3 881 58 881.1 58.6 881.3 C57.7 882.9 57.8 885 58.8 886.5Z" fill="#434343"/><polygon points="65.53,881.58 65.53,883.02 64.06,883.74 63.34,884.46 62.62,885.93 61.18,885.93 60.46,884.46 59.74,883.74 58.27,883.02 58.27,881.58 59.74,880.86 60.46,880.14 61.18,878.67 62.62,878.67 63.34,880.14 64.06,880.86" fill="#434343"/><circle cx="61.9" cy="882.3" r="1.2" fill="#151515"/></svg>
<svg style="left:48px;top:930px" width="20" height="20" viewBox="48 930 20 20"><rect x="50.6" y="932.2" width="14.5" height="14.5" rx="1.6" fill="#434343"/><path d="M54 936.3H61.6M54 939.5H61.6M54 942.7H59.2" stroke="#171717" stroke-width="1.4"/></svg>
<svg style="left:47px;top:970px" width="22" height="22" viewBox="47 970 22 22"><circle cx="57.8" cy="980" r="8" fill="#434343"/><circle cx="57.8" cy="980" r="4.5" fill="none" stroke="#171717" stroke-width="2.4"/><path d="M57.8 973.5V986.5M51.3 980H64.3" stroke="#434343" stroke-width="2.6"/><circle cx="57.8" cy="980" r="2" fill="#171717"/></svg>
<svg style="left:47px;top:1010px" width="22" height="22" viewBox="47 1010 22 22"><circle cx="57.8" cy="1020.3" r="8" fill="#434343"/><path d="M54.2 1016.2 C52.8 1016.2 53.6 1019.6 52.4 1020.3 C53.6 1021 52.8 1024.4 54.2 1024.4 M61.4 1016.2 C62.8 1016.2 62 1019.6 63.2 1020.3 C62 1021 62.8 1024.4 61.4 1024.4" fill="none" stroke="#171717" stroke-width="1"/><g fill="#171717"><circle cx="55.8" cy="1020.4" r="0.55"/><circle cx="57.8" cy="1020.4" r="0.55"/><circle cx="59.8" cy="1020.4" r="0.55"/></g></svg>
</body></html>
